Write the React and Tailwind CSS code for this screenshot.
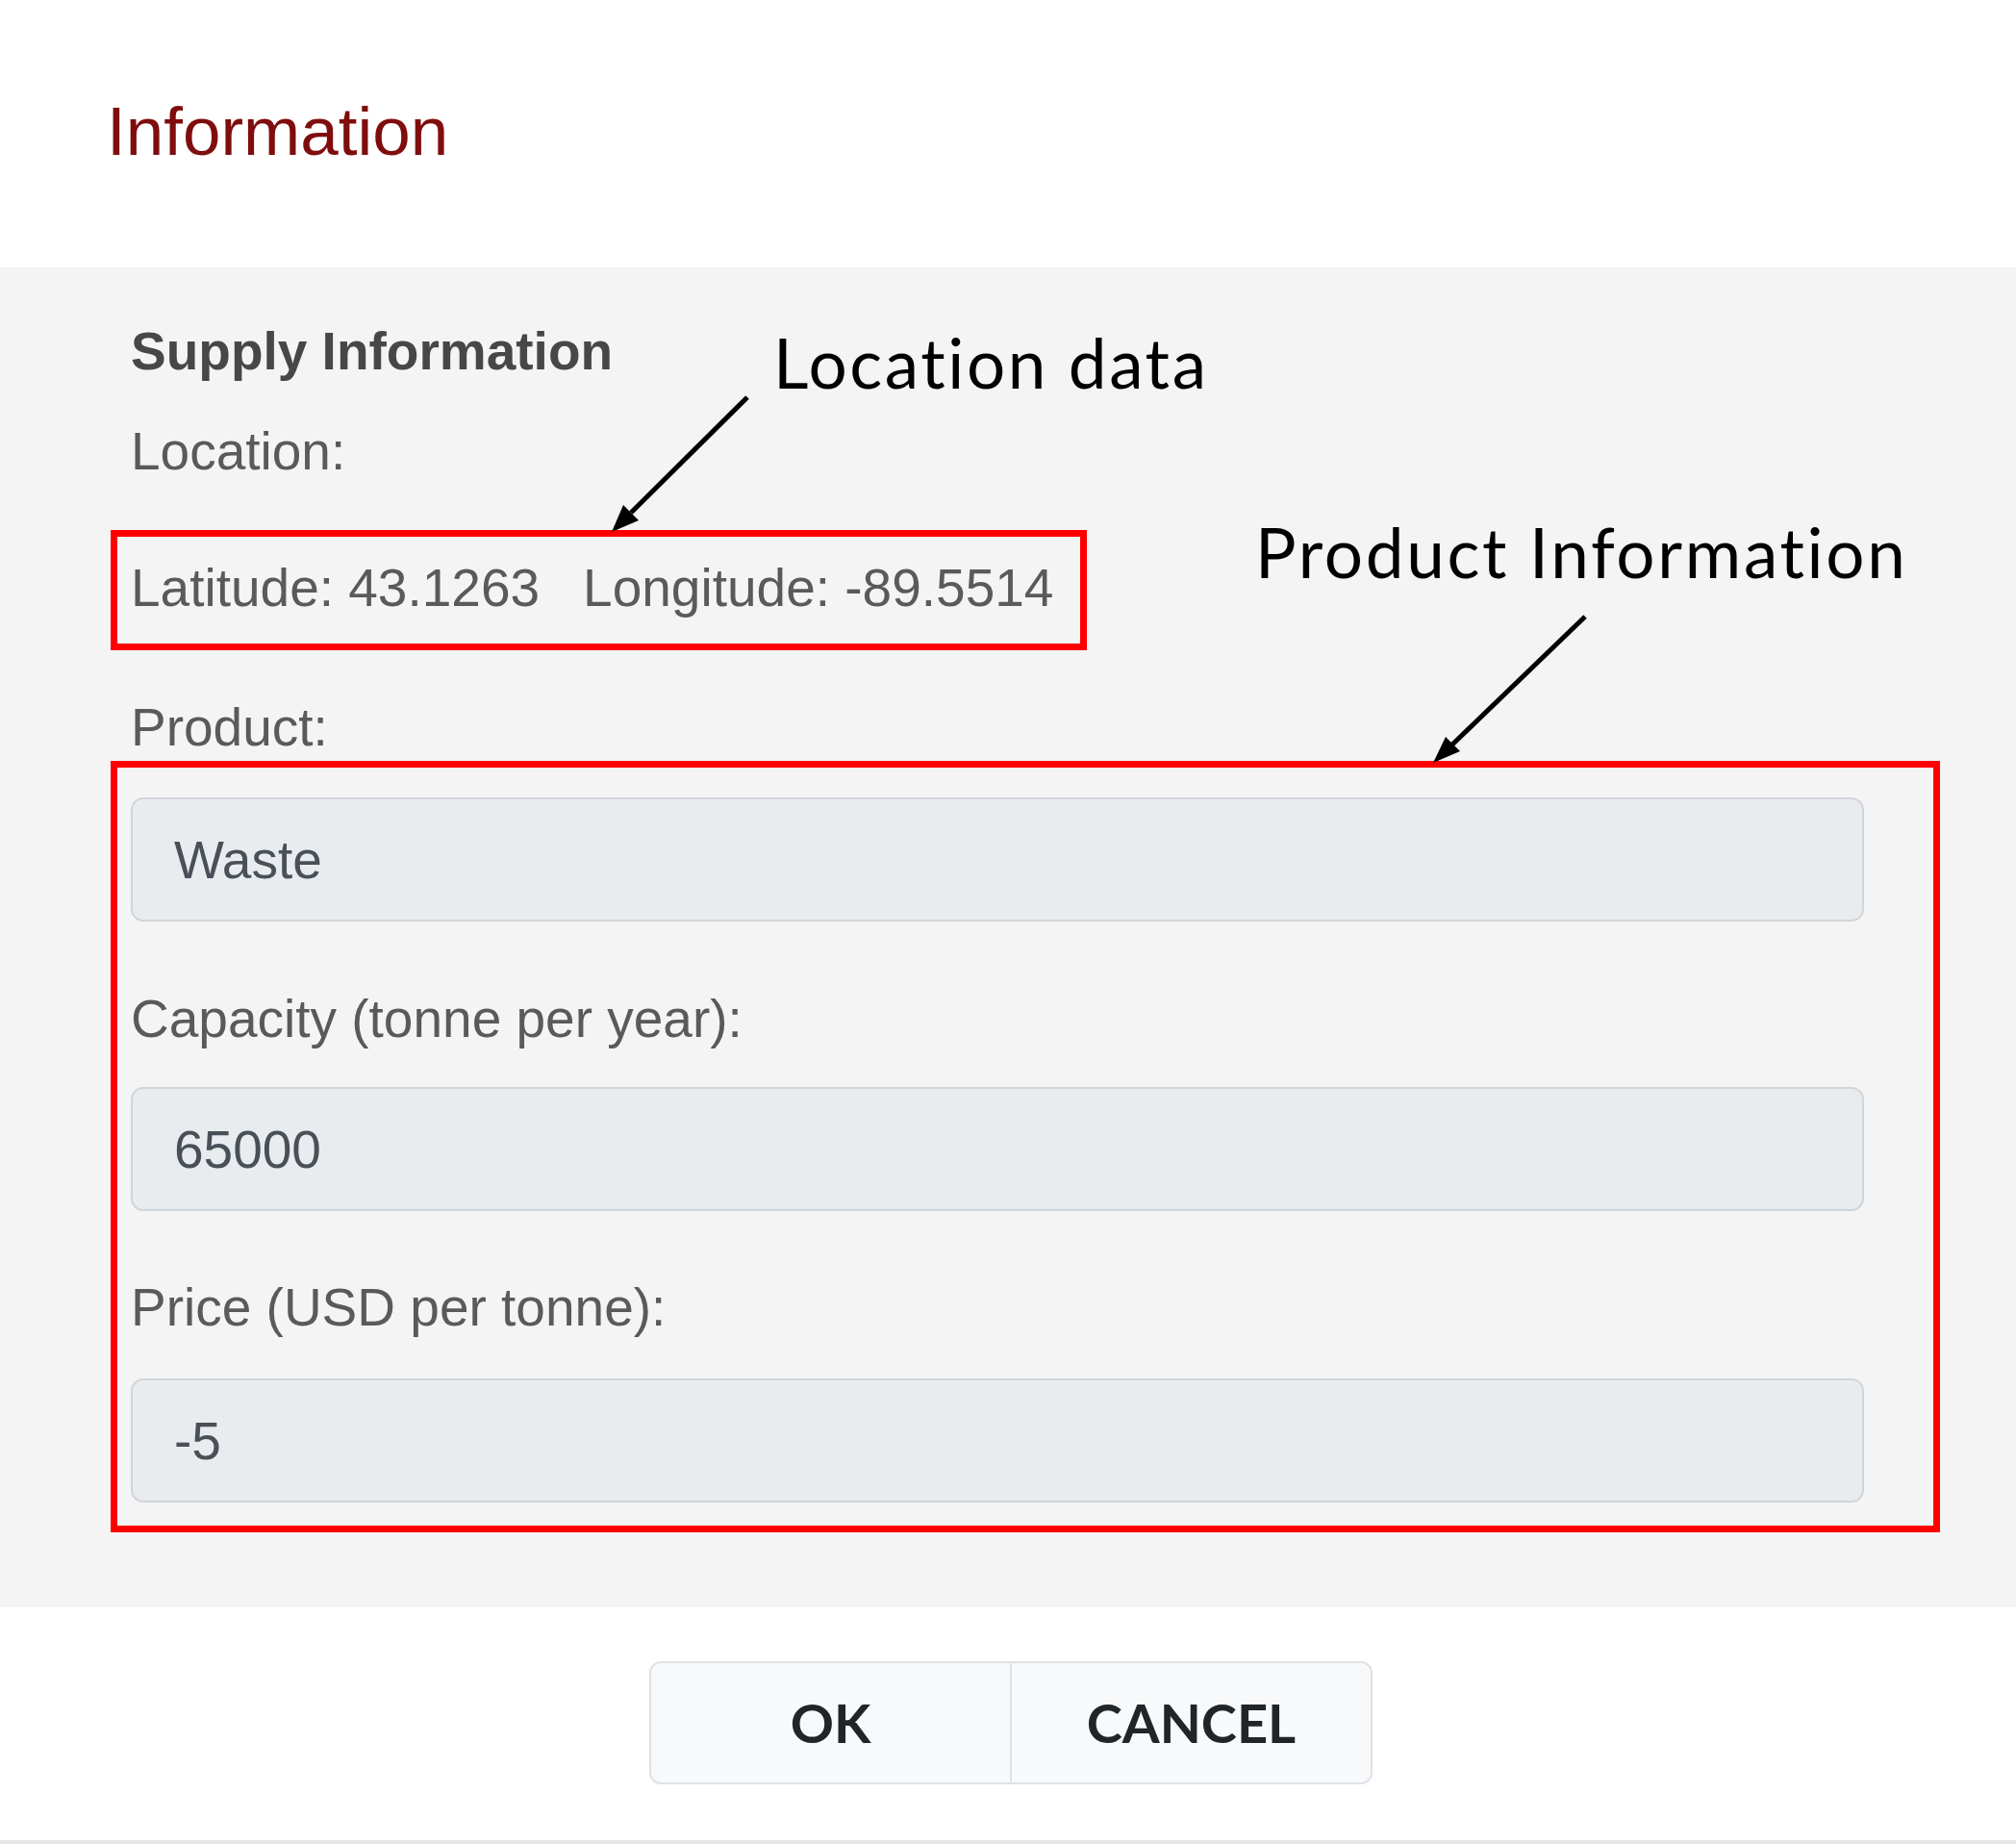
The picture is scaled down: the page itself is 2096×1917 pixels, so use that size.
import React from 'react';

const label = "text-[55px] leading-none text-[#5a5a5a]";
const field =
  "block w-full h-[129px] pl-[43px] bg-[#e9ecef] border-2 border-[#d0d5da] rounded-[13px] text-[55px] leading-none text-[#495057] font-['Liberation_Sans',Arial,sans-serif] outline-none";

function Arrows() {
  return (
    <svg className="absolute inset-0 pointer-events-none" width="2096" height="1917" viewBox="0 0 2096 1917">
      <line x1="777" y1="413" x2="656" y2="533" stroke="#000" strokeWidth="5" />
      <polygon points="636,553 664,541 648,525" fill="#000" />
      <line x1="1648" y1="641" x2="1510" y2="774" stroke="#000" strokeWidth="5" />
      <polygon points="1490,793 1518,781 1503,766" fill="#000" />
    </svg>
  );
}

export default function App() {
  return (
    <div className="relative w-[2096px] h-[1917px] overflow-hidden bg-white font-['Liberation_Sans',Arial,sans-serif]">
      <header className="h-[278px] pl-[111px] pt-[101px]">
        <h1 className="text-[71px] leading-none text-[#7f0d0d]">Information</h1>
      </header>

      <main className="h-[1393px] bg-[#f4f4f4] pl-[136px] pr-[158px] pt-[60px]">
        <h2 className="text-[55px] leading-none font-bold text-[#474747]">Supply Information</h2>
        <p className={`${label} mt-[49px]`}>Location:</p>
        <p className={`${label} mt-[87px] flex gap-[45px]`}>
          <span>Latitude: 43.1263</span>
          <span>Longitude: -89.5514</span>
        </p>
        <p className={`${label} mt-[90px]`}>Product:</p>
        <input readOnly value="Waste" className={`${field} mt-[45px]`} />
        <p className={`${label} mt-[74px]`}>Capacity (tonne per year):</p>
        <input readOnly value="65000" className={`${field} mt-[43px]`} />
        <p className={`${label} mt-[73px]`}>Price (USD per tonne):</p>
        <input readOnly value="-5" className={`${field} mt-[46px]`} />
      </main>

      <footer className="h-[246px] pt-[56px] pl-[6px] flex justify-center border-b-4 border-[#e6e6e6]">
        <div className="flex w-[752px] h-[128px] rounded-[12px] border-2 border-[#dfe2e6] bg-[#f8f9fa] font-['Lato',sans-serif] text-[56px] font-bold text-[#212529]">
          <button className="flex-1 flex items-center justify-center border-r-2 border-[#dfe2e6]">OK</button>
          <button className="flex-1 flex items-center justify-center">CANCEL</button>
        </div>
      </footer>

      {/* annotation overlay */}
      <div className="absolute left-[115px] top-[551px] w-[1015px] h-[125px] border-[7px] border-[#ff0000]" />
      <div className="absolute left-[115px] top-[791px] w-[1902px] h-[802px] border-[7px] border-[#ff0000]" />
      <div className="absolute left-[804px] top-[341px] text-[71px] leading-none tracking-[2.6px] [font-variant-ligatures:none] text-black font-['Lato',sans-serif]">
        Location data
      </div>
      <div className="absolute left-[1305px] top-[538px] text-[71px] leading-none tracking-[2.7px] [font-variant-ligatures:none] text-black font-['Lato',sans-serif]">
        Product Information
      </div>
      <Arrows />
    </div>
  );
}
